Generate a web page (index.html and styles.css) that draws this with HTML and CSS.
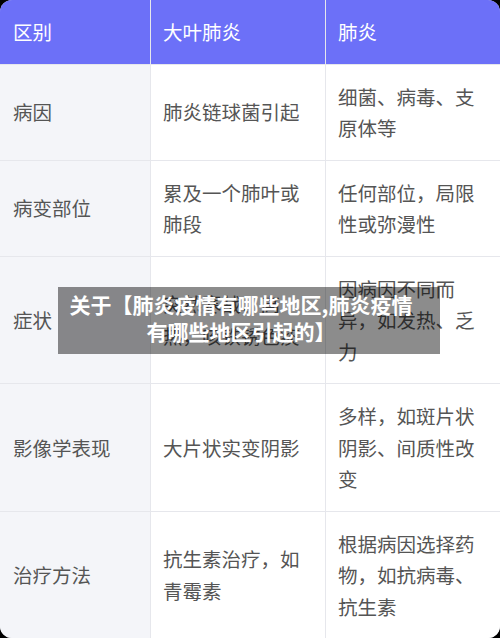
FILE: index.html
```html
<!DOCTYPE html>
<html lang="zh-CN">
<head>
<meta charset="utf-8">
<title>大叶肺炎与肺炎的区别</title>
<link rel="stylesheet" href="styles.css">
</head>
<body>
<div class="page">
  <div class="table">
    <div class="cell head first">区别</div>
    <div class="cell head">大叶肺炎</div>
    <div class="cell head">肺炎</div>

    <div class="cell first">病因</div>
    <div class="cell">肺炎链球菌引起</div>
    <div class="cell">细菌、病毒、支原体等</div>

    <div class="cell first">病变部位</div>
    <div class="cell">累及一个肺叶或肺段</div>
    <div class="cell">任何部位，局限性或弥漫性</div>

    <div class="cell first">症状</div>
    <div class="cell">突然寒战、高热，咳铁锈色痰</div>
    <div class="cell">因病因不同而异，如发热、乏力</div>

    <div class="cell first">影像学表现</div>
    <div class="cell">大片状实变阴影</div>
    <div class="cell">多样，如斑片状阴影、间质性改变</div>

    <div class="cell first">治疗方法</div>
    <div class="cell">抗生素治疗，如青霉素</div>
    <div class="cell">根据病因选择药物，如抗病毒、抗生素</div>
  </div>
  <div class="caption">关于【肺炎疫情有哪些地区,肺炎疫情有哪些地区引起的】</div>
</div>
</body>
</html>
```

FILE: styles.css
```css
html, body {
  margin: 0;
  padding: 0;
  background: #000;
}

body {
  font-family: "Noto Sans CJK SC", "Noto Sans", sans-serif;
}

.page {
  position: relative;
  width: 500px;
  height: 638px;
  overflow: hidden;
}

.table {
  display: grid;
  grid-template-columns: 150px 174px 174px;
  gap: 1px;
  background: #e6e7ec;
  border-radius: 12px;
  overflow: hidden;
  height: 638px;
  align-content: start;
}

.cell {
  background: #ffffff;
  color: #555555;
  font-size: 19.5px;
  line-height: 31.5px;
  padding: 16px 12px;
  display: flex;
  align-items: center;
}

.cell.first {
  background: #f4f5f9;
  padding-left: 13px;
}

.cell.head {
  background: #6c70f8;
  color: #ffffff;
}

.caption {
  position: absolute;
  left: 58px;
  top: 287px;
  width: 350px;
  height: 63px;
  padding: 4px 24px 0 8px;
  box-sizing: content-box;
  background: rgba(0, 0, 0, 0.45);
  color: #ffffff;
  font-weight: bold;
  font-size: 21px;
  line-height: 27px;
  text-align: center;
}
```
